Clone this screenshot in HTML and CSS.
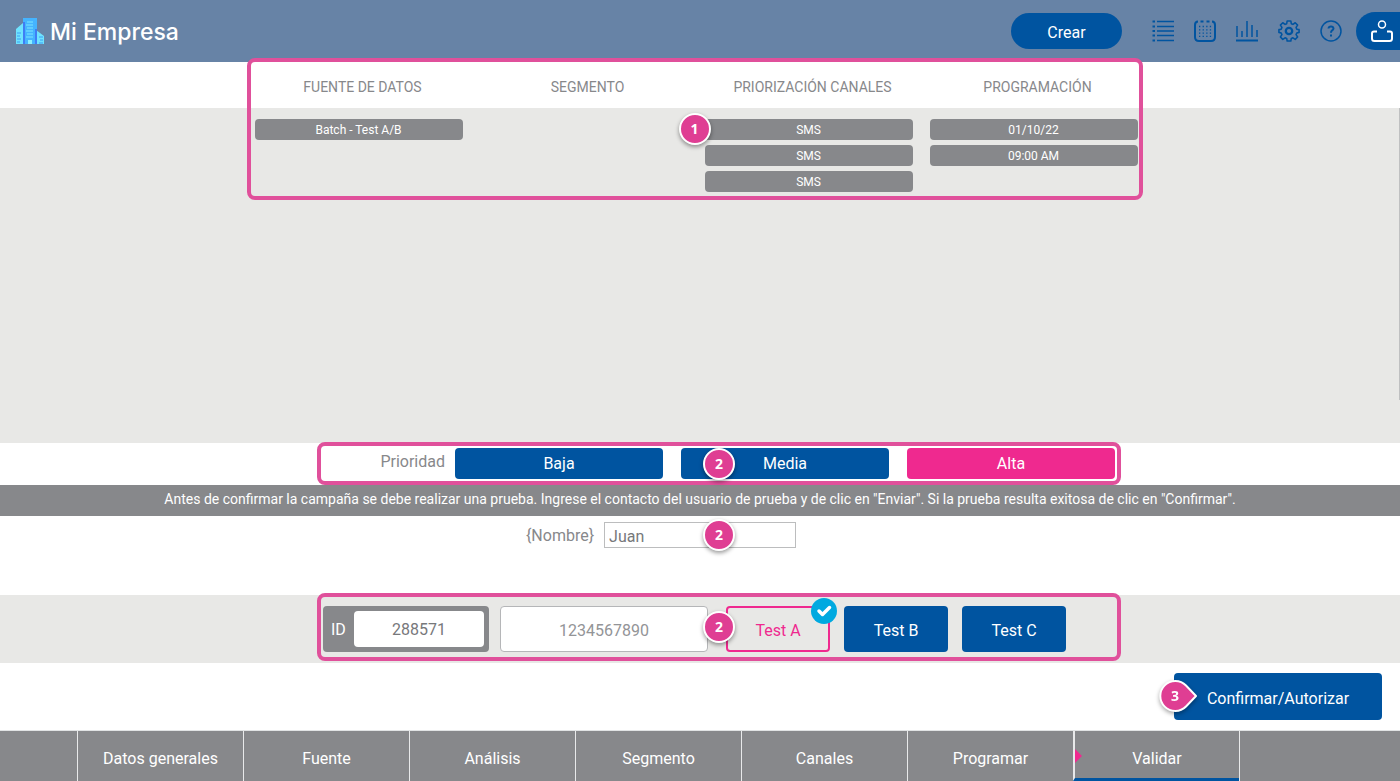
FILE: index.html
```html
<!DOCTYPE html>
<html lang="es">
<head>
<meta charset="utf-8">
<meta name="viewport" content="width=device-width, initial-scale=1">
<title>Mi Empresa - Validar campaña</title>
<link rel="stylesheet" href="styles.css">
</head>
<body>
<header class="topbar">
  <a class="brand" href="#">
    <svg class="brand-logo" viewBox="0 0 28 26" aria-hidden="true">
      <path d="M7 5h1v21H0V11z" fill="#6fe3ff"/>
      <path d="M20 12l8 6v8h-8z" fill="#6fe3ff"/>
      <path d="M7 0h14v26H7z" fill="#45b4ff"/>
      <path d="M7 4h2v22H7zM19 11h2v15h-2z" fill="#3f7ef5"/>
      <path d="M11 4h6M10 7h7M11 10h6M10 13h7M11 16h6M10 19h7" stroke="#7ce6ff" stroke-width="1"/>
      <path d="M1 15h4M1 18h3M1 21h4M1 24h3M23 19h4M24 22h3M23 25h4" stroke="#3f9ef5" stroke-width="1"/>
      <path d="M12 22h4v4h-4z" fill="#8cf0ff"/>
    </svg>
    <span>Mi Empresa</span>
  </a>
  <button class="create" type="button">Crear</button>
  <nav class="tools" aria-label="Herramientas">
    <button class="tool" type="button" aria-label="Lista">
      <svg viewBox="0 0 22 22"><path d="M5 1.500h17M5 6.500h17M5 11h17M5 15.500h17M5 20.500h17" stroke-width="1.500"/><path d="M.5 1.500h2.500M.5 6.500h2.500M.5 11h2.500M.5 15.500h2.500M.5 20.500h2.500" stroke-width="2"/></svg>
    </button>
    <button class="tool" type="button" aria-label="Calendario">
      <svg viewBox="0 0 22 22"><path d="M4 1.500Q1 1.500 1 5v12q0 4 4 4h12q4 0 4-4V5q0-3.500-3-3.500M6.500 1.500h3M12.500 1.500h3" stroke-width="2"/><path d="M5 6.500h13M5 9.800h13M5 13.100h13M5 16.400h13" stroke-width="1.300" stroke-dasharray="1.300 2.300"/></svg>
    </button>
    <button class="tool" type="button" aria-label="Reportes">
      <svg viewBox="0 0 22 22"><path d="M1 6v11M6 11v6M11 1v16M16 5v12M21 10v7" stroke-width="1.500"/><path d="M0 20.500h22" stroke-width="2"/></svg>
    </button>
    <button class="tool" type="button" aria-label="Configuración">
      <svg viewBox="-1 0 24 24"><path d="M9 1h4l.5 3 1.800.8 2.500-1.800 2.600 2.600-1.700 2.500.8 1.900 2.500.5v3l-2.500.7-.8 1.800 1.700 2.500-2.600 2.600-2.500-1.700-1.800.7-.5 2.900H9l-.5-2.900-1.800-.7-2.500 1.700-2.600-2.600L3.300 16l-.8-1.800L0 13.500v-3l2.500-.5.8-1.900-1.700-2.500L4.200 3l2.500 1.800L8.500 4z" stroke-width="1.700" stroke-linejoin="round"/><circle cx="11" cy="12" r="3.500" stroke-width="2.500"/></svg>
    </button>
    <button class="tool" type="button" aria-label="Ayuda">
      <svg viewBox="0 0 22 22"><circle cx="11" cy="11" r="10" stroke-width="1.500"/><path d="M8.500 8.500Q8.700 6.500 11 6.500t2.500 2q0 1.200-1.500 2-1 .7-1 2.300M11 14.500v2" stroke-width="2"/></svg>
    </button>
  </nav>
  <button class="account" type="button" aria-label="Cuenta">
    <svg viewBox="0 0 22 22"><circle cx="11" cy="4.500" r="3.500" stroke-width="1.500"/><path d="M6 11.500H3q-2 0-2 2v5q0 2.500 2.500 2.500h15q2.500 0 2.500-2.500v-5q0-2-2-2h-3" stroke-width="2"/></svg>
  </button>
</header>

<main class="page">
  <section class="summary" aria-label="Resumen">
    <div class="band heads">
      <div class="columns">
        <h2>FUENTE DE DATOS</h2>
        <h2>SEGMENTO</h2>
        <h2>PRIORIZACIÓN CANALES</h2>
        <h2>PROGRAMACIÓN</h2>
        <span class="outline"></span>
      </div>
    </div>
    <div class="band board">
      <div class="columns">
        <ul><li>Batch - Test A/B</li></ul>
        <ul></ul>
        <ul class="marked"><li>SMS</li><li>SMS</li><li>SMS</li><li class="step step-corner">1</li></ul>
        <ul><li>01/10/22</li><li>09:00 AM</li></ul>
      </div>
      <span class="scroll-thumb"></span>
    </div>
  </section>

  <section class="priority">
    <div class="framed priority-frame" role="group" aria-labelledby="prio">
      <span class="priority-label" id="prio">Prioridad</span>
      <button class="level" type="button">Baja</button>
      <button class="level" type="button">Media</button>
      <button class="level level-on" type="button">Alta</button>
      <span class="step step-mid">2</span>
    </div>
  </section>

  <p class="notice">Antes de confirmar la campaña se debe realizar una prueba. Ingrese el contacto del usuario de prueba y de clic en "Enviar". Si la prueba resulta exitosa de clic en "Confirmar".</p>

  <section class="variables">
    <label for="nombre">{Nombre}</label>
    <span class="field"><input id="nombre" type="text" value="Juan"><span class="step step-mid">2</span></span>
  </section>

  <section class="tests">
    <div class="framed tests-frame">
      <div class="id-box"><label for="id">ID</label><input id="id" type="text" value="288571"></div>
      <input class="phone" type="text" aria-label="Teléfono" placeholder="1234567890">
      <div class="test-list">
        <button class="test test-on" type="button">Test A
          <svg class="check" viewBox="0 0 26 26" aria-hidden="true"><circle cx="13" cy="13" r="13" fill="#00a9e0"/><path d="M8 13l3.500 3.500L18.500 9.500" fill="none" stroke="#fff" stroke-width="3.500" stroke-linecap="round" stroke-linejoin="round"/></svg>
        </button>
        <button class="test" type="button">Test B</button>
        <button class="test" type="button">Test C</button>
      </div>
      <span class="step step-mid">2</span>
    </div>
  </section>

  <section class="actions">
    <button class="confirm" type="button">Confirmar/Autorizar
      <span class="pointer"><svg viewBox="0 0 44 44" aria-hidden="true"><path d="M30 10.500L40 21L30 31.500A15 15 0 1 1 30 10.500z" fill="#df3e93" stroke="#fff" stroke-width="2" stroke-linejoin="round"/></svg><span class="pointer-number">3</span></span>
    </button>
  </section>
</main>

<nav class="stages" aria-label="Etapas">
  <span></span>
  <a href="#">Datos generales</a>
  <a href="#">Fuente</a>
  <a href="#">Análisis</a>
  <a href="#">Segmento</a>
  <a href="#">Canales</a>
  <a href="#">Programar</a>
  <a class="current" href="#" aria-current="step">Validar</a>
  <span class="stage-end"></span>
</nav>
</body>
</html>
```

FILE: styles.css
```css
:root {
  --blue: #0054a0;
  --grey: #87888b;
  --light: #e8e8e6;
  --pink: #ef298f;
  --frame: #e0509b;
}

* { box-sizing: border-box; }

body {
  margin: 0;
  min-height: 100vh;
  display: flex;
  flex-direction: column;
  background: #fff;
  color: var(--grey);
  font: 16px/20px Roboto, "Noto Sans", sans-serif;
}

button, input { font: inherit; }
button { padding: 0; border: 0; cursor: pointer; }
a { color: inherit; text-decoration: none; }
h2, ul, p { margin: 0; padding: 0; }

.topbar {
  display: flex;
  align-items: center;
  height: 62px;
  padding-left: 16px;
  background: #6783a6;
}
.brand {
  display: flex;
  align-items: center;
  gap: 6px;
  margin-right: auto;
  color: #fff;
  font: 500 23px/28px Inter, sans-serif;
}
.brand span { padding-top: 2px; }
.brand-logo { width: 28px; height: 26px; }
.create {
  width: 111px;
  height: 36px;
  padding-top: 3px;
  border-radius: 18px;
  background: var(--blue);
  color: #fff;
}
.tools { display: flex; gap: 20px; margin: 0 14px 0 30px; }
.tool { display: flex; background: none; }
.tool svg, .account svg { width: 22px; height: 22px; fill: none; overflow: visible; }
.tool svg { stroke: var(--blue); }
.account {
  display: flex;
  align-items: center;
  width: 44px;
  height: 38px;
  padding-left: 15px;
  border-radius: 19px 0 0 19px;
  background: var(--blue);
}
.account svg { stroke: #fff; }

.page { flex: 1; display: flex; flex-direction: column; }
.summary { flex: 1; display: flex; flex-direction: column; }
.band { position: relative; display: flex; justify-content: center; padding-right: 8px; }
.heads { height: 46px; align-items: center; }
.board { flex: 1; align-items: flex-start; padding-top: 11px; background: var(--light); }
.columns { position: relative; display: grid; grid-template-columns: repeat(4, 208px); column-gap: 17px; }
.heads h2 { padding: 3px 0 0 8px; text-align: center; font-size: 14px; font-weight: 400; line-height: 20px; white-space: nowrap; }
.outline {
  position: absolute;
  z-index: 1;
  top: -16px;
  right: -5px;
  left: -8px;
  height: 142px;
  border: 4px solid var(--frame);
  border-radius: 8px;
}
.columns ul { display: flex; flex-direction: column; gap: 5px; list-style: none; }
.columns li:not(.step) {
  height: 21px;
  border-radius: 4px;
  background: var(--grey);
  color: #fff;
  text-align: center;
  font-size: 12px;
  line-height: 22px;
}
.marked { position: relative; }
.scroll-thumb { position: absolute; top: 0; right: 0; width: 1px; height: 292px; background: #bfc0c1; }

.step {
  position: absolute;
  z-index: 2;
  width: 32px;
  height: 32px;
  border: 2px solid #fff;
  border-radius: 50%;
  background: #df3e93;
  box-shadow: 0 2px 4px rgba(0, 0, 0, .4);
  color: #fff;
  text-align: center;
  font: 700 14px/27px "Open Sans", sans-serif;
}
.step-corner { top: -6px; left: -26px; }
.step-mid { top: calc(50% - 16px); left: calc(50% - 16px); }

.framed {
  position: relative;
  display: flex;
  width: 804px;
  border: 4px solid var(--frame);
  border-radius: 8px;
}
.priority, .tests { display: flex; justify-content: center; padding-left: 38px; }
.priority { height: 42px; }
.priority-frame { height: 43px; margin-top: -1px; align-items: center; justify-content: flex-end; gap: 18px; padding-right: 2px; }
.priority-label { margin: -4px -8px 0 0; }
.level { width: 208px; height: 31px; padding-top: 1px; border-radius: 4px; background: var(--blue); color: #fff; }
.level-on { background: var(--pink); }

.notice { padding: 4px 16px 7px; background: var(--grey); color: #fff; text-align: center; font-size: 14px; }

.variables { display: flex; justify-content: center; align-items: flex-start; gap: 10px; height: 79px; padding: 6px 78px 0 0; }
.variables label { padding-top: 4px; }
.field { position: relative; }
.field input {
  display: block;
  width: 192px;
  height: 26px;
  padding: 3px 4px 0;
  border: 1px solid #bcbdbe;
  background: #fff;
  color: #77787b;
}
.field .step-mid { left: 99px; }

.tests { height: 68px; background: var(--light); }
.tests-frame { height: 68px; margin-top: -2px; align-items: center; gap: 11px; padding: 4px 0 0 2px; }
.id-box { display: flex; align-items: center; gap: 9px; height: 46px; padding: 0 5px 0 8px; border-radius: 4px; background: var(--grey); color: #fff; }
.id-box input { width: 130px; height: 36px; padding: 0; border: 0; border-radius: 4px; background: #fff; color: #77787b; text-align: center; }
.id-box label { width: 14px; padding-top: 2px; }
.phone { width: 208px; height: 46px; padding: 2px 0 0; border: 1px solid #b5b6b8; border-radius: 4px; background: #fff; text-align: center; }
.phone::placeholder { color: #939497; opacity: 1; }
.test-list { display: flex; gap: 14px; margin-left: 7px; }
.test { position: relative; width: 104px; height: 46px; padding-top: 3px; border-radius: 4px; background: var(--blue); color: #fff; }
.test-on { border: 2px solid var(--pink); background: var(--light); color: var(--pink); }
.check { position: absolute; top: -10px; right: -9px; width: 26px; height: 26px; }

.actions { display: flex; justify-content: flex-end; height: 67px; padding: 10px 18px 0; }
.confirm { position: relative; width: 208px; height: 47px; padding-top: 4px; border-radius: 4px; background: var(--blue); color: #fff; }
.pointer { position: absolute; top: 2px; left: -18px; width: 44px; height: 44px; filter: drop-shadow(0 2px 2px rgba(0, 0, 0, .35)); }
.pointer svg { display: block; width: 44px; height: 44px; }
.pointer-number { position: absolute; top: 0; left: 0; width: 38px; text-align: center; font: 700 14px/41px "Open Sans", sans-serif; }

.stages {
  display: grid;
  grid-template-columns: 77fr repeat(7, 166fr) 161fr;
  height: 51px;
  border-top: 1px solid #e1e3e4;
  background: var(--grey);
  color: #fff;
}
.stages a, .stage-end { border-left: 1px solid #e8e9ea; }
.stages a { position: relative; display: flex; align-items: center; justify-content: center; padding-top: 5px; }
.stages .current { border-left-width: 2px; border-bottom: 3px solid var(--blue); padding-top: 8px; }
.current::before {
  content: "";
  position: absolute;
  top: 18px;
  left: 0;
  border: 7px solid transparent;
  border-left-color: var(--pink);
  border-right-width: 0;
}
```
